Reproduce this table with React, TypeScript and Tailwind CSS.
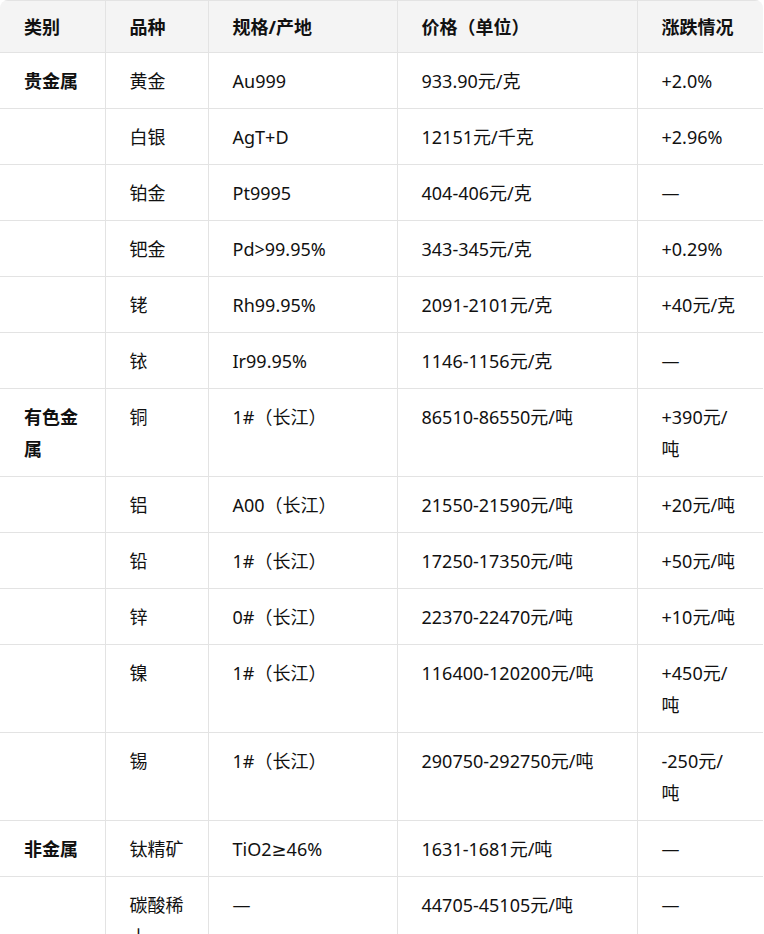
import React from "react";

type Row = {
  cat?: string;
  name: string;
  spec: React.ReactNode;
  price: string;
  change: string;
  tall?: boolean;
};

const rows: Row[] = [
  { cat: "贵金属", name: "黄金", spec: "Au999", price: "933.90元/克", change: "+2.0%" },
  { name: "白银", spec: "AgT+D", price: "12151元/千克", change: "+2.96%" },
  { name: "铂金", spec: "Pt9995", price: "404-406元/克", change: "—" },
  { name: "钯金", spec: "Pd>99.95%", price: "343-345元/克", change: "+0.29%" },
  { name: "铑", spec: "Rh99.95%", price: "2091-2101元/克", change: "+40元/克" },
  { name: "铱", spec: "Ir99.95%", price: "1146-1156元/克", change: "—" },
  { cat: "有色金属", name: "铜", spec: "1#（长江）", price: "86510-86550元/吨", change: "+390元/吨", tall: true },
  { name: "铝", spec: "A00（长江）", price: "21550-21590元/吨", change: "+20元/吨" },
  { name: "铅", spec: "1#（长江）", price: "17250-17350元/吨", change: "+50元/吨" },
  { name: "锌", spec: "0#（长江）", price: "22370-22470元/吨", change: "+10元/吨" },
  { name: "镍", spec: "1#（长江）", price: "116400-120200元/吨", change: "+450元/吨", tall: true },
  { name: "锡", spec: "1#（长江）", price: "290750-292750元/吨", change: "-250元/吨", tall: true },
  {
    cat: "非金属",
    name: "钛精矿",
    spec: (
      <>
        TiO2<span style={{ fontFamily: '"DejaVu Sans", sans-serif', lineHeight: 1 }}>≥</span>46%
      </>
    ),
    price: "1631-1681元/吨",
    change: "—",
  },
  { name: "碳酸稀土", spec: "—", price: "44705-45105元/吨", change: "—", tall: true },
];

const headers = ["类别", "品种", "规格/产地", "价格（单位）", "涨跌情况"];

const cell = "border border-[#e3e3e3] px-6 pt-3 pb-0 align-top leading-8";

export default function App() {
  return (
    <div
      className="bg-white text-[18px] text-[#111]"
      style={{ fontFamily: '"Noto Sans", "Noto Sans CJK SC", sans-serif' }}
    >
      <div className="w-[763px] overflow-hidden rounded-t-lg">
        <table className="w-[763px] table-fixed border-collapse text-left">
          <colgroup>
            <col className="w-[105px]" />
            <col className="w-[103px]" />
            <col className="w-[189px]" />
            <col className="w-[240px]" />
            <col className="w-[126px]" />
          </colgroup>
          <thead>
            <tr className="h-[52px] bg-[#f4f4f4]">
              {headers.map((h, i) => (
                <th
                  key={h}
                  className={
                    "border border-[#e3e3e3] px-6 py-0 text-left font-bold leading-8" +
                    (i === 0 ? " border-l-0" : "")
                  }
                >
                  {h}
                </th>
              ))}
            </tr>
          </thead>
          <tbody>
            {rows.map((r, i) => (
              <tr key={i} className={r.tall ? "h-[88px]" : "h-[56px]"}>
                <td className={cell + " border-l-0 font-bold"}>{r.cat ?? ""}</td>
                <td className={cell}>{r.name}</td>
                <td className={cell}>{r.spec}</td>
                <td className={cell}>{r.price}</td>
                <td className={cell}>{r.change}</td>
              </tr>
            ))}
          </tbody>
        </table>
      </div>
    </div>
  );
}
